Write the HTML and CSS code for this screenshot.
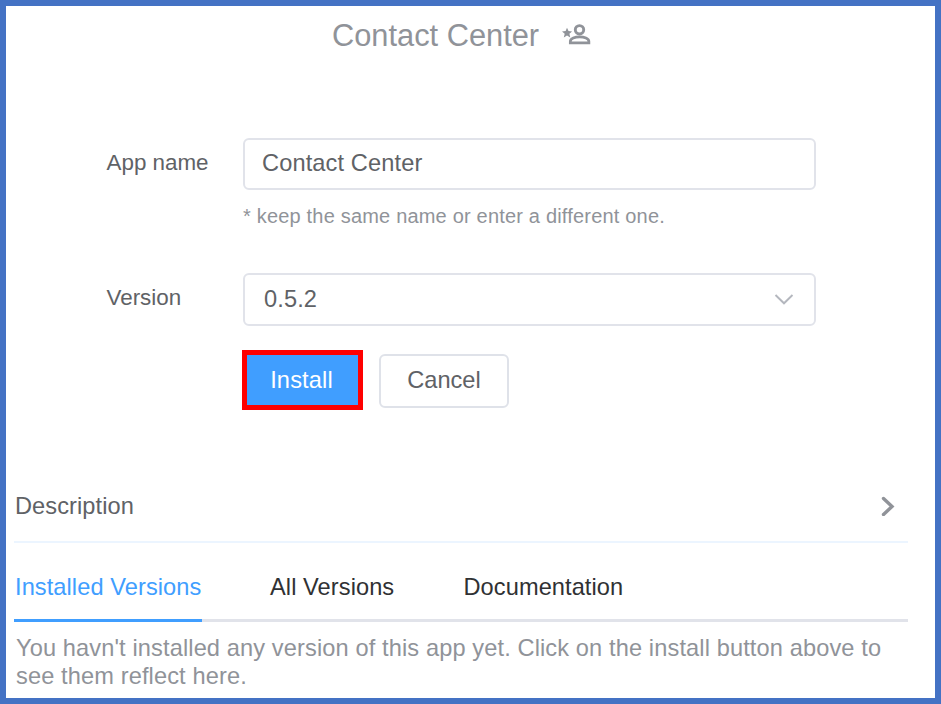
FILE: index.html
```html
<!DOCTYPE html>
<html lang="en">
<head>
<meta charset="utf-8">
<title>Contact Center</title>
<link rel="stylesheet" href="styles.css">
</head>
<body>
<main class="page">
  <header class="header">
    <h1 class="title">Contact Center</h1>
    <svg class="user-icon" width="30" height="24" viewBox="0 0 30 24" fill="none" stroke="#909399">
      <path d="M5 4.800l1.500 3.300 3.600.3-2.700 2.400.9 3.600-3.300-2-3.200 2 .9-3.600L0 8.400l3.600-.3z" fill="#909399" stroke="none"/>
      <circle cx="17.500" cy="6.800" r="4.200" stroke-width="2.900"/>
      <path d="M8.300 19.800v-1.400c0-3.100 4.800-4.600 9.300-4.600s9.300 1.500 9.300 4.600v1.400z" stroke-width="2.700"/>
    </svg>
  </header>
  <form class="form">
    <label class="label" for="name">App name</label>
    <input class="field" id="name" type="text" value="Contact Center">
    <p class="hint">* keep the same name or enter a different one.</p>
    <span class="label label-version">Version</span>
    <div class="field select">
      <span>0.5.2</span>
      <svg width="20" height="12" viewBox="0 0 20 12" fill="none" stroke="#b4b7be" stroke-width="1.900"><path d="M1.500 1l8.500 8.300 8.500-8.300"/></svg>
    </div>
    <div class="actions">
      <button class="install" type="button">Install</button>
      <button class="cancel" type="button">Cancel</button>
    </div>
  </form>
  <section class="description">
    <span>Description</span>
    <svg width="14" height="20" viewBox="0 0 14 20" fill="none" stroke="#909399" stroke-width="3.400" stroke-linecap="round"><path d="M2.500 2.500l8.500 8-8.500 8"/></svg>
  </section>
  <nav class="tabs">
    <a class="tab active">Installed Versions</a>
    <a class="tab all">All Versions</a>
    <a class="tab docs">Documentation</a>
  </nav>
  <p class="empty">You havn't installed any version of this app yet. Click on the install button above to<br>see them reflect here.</p>
</main>
</body>
</html>
```
FILE: styles.css
```css
* { box-sizing: border-box; }
body {
  margin: 0;
  font-family: "Liberation Sans", Arial, sans-serif;
  font-size: 23.6px;
  color: #606266;
}
.page {
  width: 941px;
  height: 704px;
  border: 6px solid #4472c4;
  background: #fff;
  overflow: hidden;
}
.header {
  display: flex;
  align-items: center;
  height: 58px;
  padding-left: 326px;
}
.title {
  width: 230px;
  margin: 2px 0 0;
  font-size: 30.800px;
  font-weight: 400;
  color: #909399;
}
.user-icon { display: block; }
.form {
  display: grid;
  grid-template-columns: 136.5px 573px;
  grid-template-rows: 52px 83px 53px auto;
  margin: 74px 0 0 100.5px;
}
.label { line-height: 50px; font-size: 22.4px; }
.field {
  grid-column: 2;
  width: 573px;
  height: 52px;
  padding: 0 18px;
  border: 2px solid #e1e3ea;
  border-radius: 6px;
  background: #fff;
  font: inherit;
  letter-spacing: .12px;
  color: #606266;
}
input.field { padding: 0 18px 2px 17px; }
.hint {
  grid-column: 2;
  margin: 13px 0 0;
  font-size: 20px;
  line-height: 26px;
  letter-spacing: .19px;
  color: #909399;
}
.label-version { grid-row: 3; }
.select {
  display: flex;
  align-items: center;
  justify-content: space-between;
  height: 53px;
  padding: 0 20px 0 19px;
}
.actions {
  grid-column: 2;
  display: flex;
  gap: 16px;
  margin: 24px 0 0 -1px;
}
.install, .cancel {
  font: inherit;
  text-align: center;
}
.install {
  width: 121px;
  height: 60px;
  padding: 0 2px 0 0;
  border: 5px solid #f00;
  background: #409eff;
  color: #fff;
  letter-spacing: .15px;
}
.cancel {
  width: 130px;
  height: 54px;
  margin-top: 4px;
  padding: 0 0 2px;
  border: 2px solid #dfe2e9;
  border-radius: 6px;
  background: #fff;
  color: #606266;
}
.description {
  display: flex;
  align-items: center;
  justify-content: space-between;
  width: 894px;
  height: 73px;
  margin: 60px 0 0 8px;
  padding: 1px 13px 0 1px;
  border-bottom: 2px solid #ecf5ff;
  letter-spacing: .08px;
}
.tabs {
  display: flex;
  width: 894px;
  height: 79px;
  margin-left: 8px;
  border-bottom: 3px solid #e1e3ea;
  line-height: 89px;
  letter-spacing: .08px;
  color: #303133;
}
.tab { height: 79px; white-space: nowrap; }
.active {
  width: 188px;
  padding-left: 1px;
  border-bottom: 3px solid #409eff;
  color: #409eff;
}
.all { margin-left: 68px; width: 125px; }
.docs { margin-left: 68.5px; }
.empty {
  margin: 12px 0 0 10px;
  line-height: 28px;
  letter-spacing: .12px;
  white-space: nowrap;
  color: #909399;
}
```
